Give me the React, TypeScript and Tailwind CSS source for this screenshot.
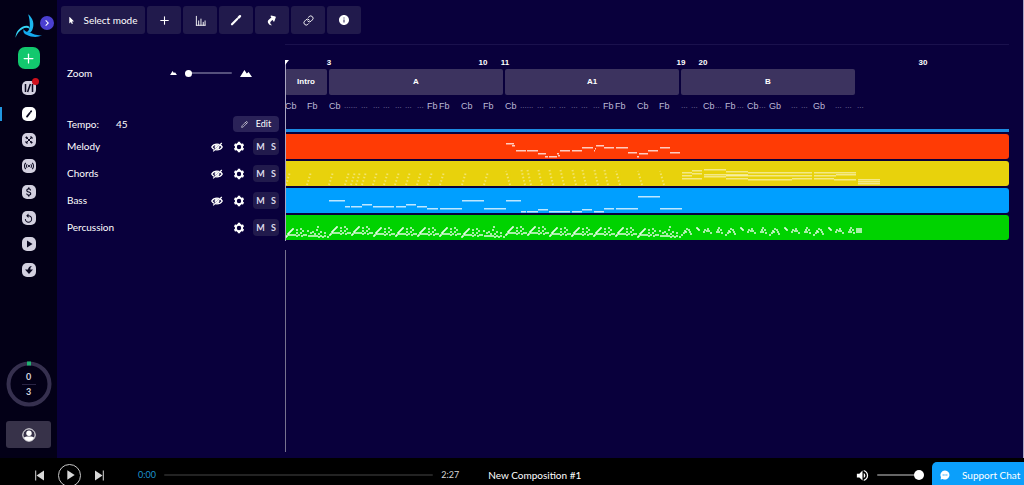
import { useState, type ReactNode } from "react";
import { Link, Plus, Pencil } from "lucide-react";
import { FaMousePointer, FaShare } from "react-icons/fa";
import {
  MdAttachMoney,
  MdChevronRight,
  MdInfo,
  MdPlayArrow,
  MdReplay,
  MdSensors,
  MdVolumeUp,
} from "react-icons/md";

const BAR = 22;

type Note = [x: number, y: number, width: number];

const sections = [
  { name: "Intro", bars: 2 },
  { name: "A", bars: 8 },
  { name: "A1", bars: 8 },
  { name: "B", bars: 8 },
];

const rulerMarks = [3, 10, 11, 19, 20, 30];

// label and distance to the next label
const phrase: [string, number][] = [
  ["Cb", 15],
  ["......", 17],
  ["...", 12],
  ["...", 10],
  ["...", 12],
  ["...", 10],
  ["...", 12],
  ["...", 10],
  ["Fb", 12],
  ["Fb", 22],
  ["Cb", 22],
  ["Fb", 22],
];

const chords: [string, number][] = [
  ["Cb", 22],
  ["Fb", 22],
  ...phrase,
  ...phrase,
  ["...", 10],
  ["...", 12],
  ["Cb", 12],
  ["...", 10],
  ["Fb", 12],
  ["...", 10],
  ["Cb", 12],
  ["...", 10],
  ["Gb", 22],
  ["...", 10],
  ["...", 12],
  ["Gb", 22],
  ["...", 10],
  ["...", 12],
  ["...", 12],
];

const melodyNotes: Note[] = [
  [221, 9, 8], [227, 11, 3], [231, 16, 10], [242, 16, 11], [253, 19, 8], [260, 22, 3],
  [264, 22, 8], [272, 19, 2], [273, 21, 2], [275, 16, 10], [287, 16, 10], [297, 13, 11],
  [309, 16, 1], [310, 14, 1], [311, 11, 8], [319, 13, 10], [331, 13, 12], [343, 18, 9],
  [352, 22, 2], [354, 19, 9], [363, 16, 10], [375, 13, 10], [385, 18, 10],
];

const bassNotes: Note[] = [
  [44, 12, 16], [60, 18, 5], [66, 18, 11], [77, 16, 10], [88, 18, 21], [111, 18, 10],
  [121, 16, 10], [132, 18, 10], [142, 20, 11], [155, 20, 22], [177, 12, 22], [199, 20, 22],
  [221, 12, 15], [236, 23, 5], [242, 23, 11], [253, 21, 10], [264, 23, 21], [287, 23, 10],
  [297, 21, 10], [309, 23, 10], [319, 20, 10], [331, 20, 22], [353, 8, 22], [375, 20, 22],
];

const sustained: Note[] = [
  [397, 11, 10], [397, 14, 10], [397, 17, 20],
  [407, 9, 10], [407, 12, 10],
  [419, 8, 22], [419, 13, 44], [419, 15, 22],
  [441, 10, 22], [441, 14, 44], [441, 17, 22],
  [463, 11, 22], [463, 18, 44], [485, 11, 22], [485, 14, 22],
  [507, 11, 20], [507, 14, 20], [507, 17, 20],
  [529, 11, 42], [529, 14, 22], [529, 17, 20], [551, 13, 20], [549, 18, 22],
  [573, 18, 22], [573, 20, 22], [573, 22, 22],
];

// strummed chords: the first half leans right, the second half leans left
const strumsUp = [1, 22, 44, 60, 66, 71, 77, 88, 99, 110, 121, 132, 143, 155, 177, 199];
const strumsDown = [221, 236, 242, 253, 264, 275, 287, 297, 309, 319, 331, 353, 375];

const beat: [number, number][] = [
  [0, 8], [1, 7], [2, 5], [3, 4], [4, 3], [5, 2], [6, 1], [7, 0],
  [3, 6], [5, 6], [7, 6], [9, 6], [11, 4], [11, 1], [11, 7], [13, 6], [15, 4],
  [15, 0], [17, 2], [16, 7], [18, 6], [20, 6],
];
const fill: [number, number][] = [
  [0, 2], [1, 7], [3, 4], [3, 7], [5, 3], [5, 7], [7, 7], [7, 5], [9, 1], [9, 7],
  [11, 5], [11, 8], [13, 3], [13, 7], [15, 8], [17, 4], [17, 7], [20, 8], [10, -2],
];
const arch: [number, number][] = [
  [0, 7], [2, 5], [3, 3], [4, 4], [5, 1], [7, 2], [8, 4], [9, 6], [15, 0], [16, 1], [17, 2],
];
const archDouble: [number, number][] = [
  [0, 4], [1, 2], [3, 3], [4, 1], [5, 3], [7, 5], [13, 4], [14, 2], [15, 0], [15, 4], [17, 2], [18, 5],
];

function percussionBar(bar: number) {
  if (bar >= 19) {
    return bar % 2 ? arch : archDouble;
  }
  return bar === 2 || bar === 10 || bar === 18 ? fill : beat;
}

function percussionTop(bar: number) {
  if ([3, 4, 11, 12].includes(bar)) return 11;
  if ([1, 2, 9, 10, 17, 18].includes(bar)) return 13;
  return 12;
}

function Notes({ notes }: { notes: Note[] }) {
  return (
    <>
      {notes.map(([x, y, width], i) => (
        <rect key={i} x={x} y={y} width={width} height={1.5} />
      ))}
    </>
  );
}

function Strum({ x, lean, top }: { x: number; lean: number; top: number }) {
  return (
    <line
      x1={lean > 0 ? x : x + 4}
      y1={24}
      x2={lean > 0 ? x + 4 : x}
      y2={top}
      stroke="currentColor"
      strokeWidth={2}
      strokeDasharray="1.5 2"
      opacity={0.8}
    />
  );
}

function Percussion() {
  return (
    <g>
      {Array.from({ length: 26 }, (_, i) => i + 1).map((bar) => (
        <g key={bar}>
          {percussionBar(bar).map(([x, y], i) => (
            <rect key={i} x={(bar - 1) * BAR + x} y={percussionTop(bar) + y} width={2} height={2} />
          ))}
        </g>
      ))}
      <rect x={571} y={13} width={6} height={5} />
    </g>
  );
}

const tracks: { name: string; lane: string; hideable: boolean; notes: ReactNode }[] = [
  { name: "Melody", lane: "bg-[#ff3b05] text-white/75", hideable: true, notes: <Notes notes={melodyNotes} /> },
  {
    name: "Chords",
    lane: "bg-[#e8d20c] text-white/50",
    hideable: true,
    notes: (
      <>
        {strumsUp.map((x) => <Strum key={x} x={x} lean={1} top={11} />)}
        {strumsDown.map((x) => <Strum key={x} x={x} lean={-1} top={x > 230 && x < 330 ? 7 : 10} />)}
        <Notes notes={sustained} />
      </>
    ),
  },
  { name: "Bass", lane: "bg-[#009fff] text-white/75", hideable: true, notes: <Notes notes={bassNotes} /> },
  { name: "Percussion", lane: "bg-[#00d300] text-white/65", hideable: false, notes: <Percussion /> },
];

function Logo() {
  return (
    <svg viewBox="46 40 80 72" className="h-6 w-[27px]" aria-hidden="true">
      <path d="M85 41c15 12 20 31 12 48-3 7-10 9-17 6 8-5 10-12 10-22 0-12-2-22-5-32z" fill="#1cb6f0" />
      <path d="M47 111c1-20 15-35 34-36 6 0 9 4 9 10-8-5-15-4-22 0-9 5-17 15-21 26z" fill="#35d6f8" />
      <path d="M71 86c-2 9 2 14 9 16 16 8 32 9 46 2-15 1-26-3-36-9-8 1-14-3-19-9z" fill="#14aaf0" />
    </svg>
  );
}

function BarsIcon() {
  return (
    <svg viewBox="0 0 12 12" className="size-[11px]" fill="none" stroke="currentColor">
      <path d="M1.500 1v10.500M4 6v5.500M6.500 4v7.500M9 7.500v4M11 6v5.500M1 11.200h10.500" />
    </svg>
  );
}

function WandIcon() {
  return (
    <svg viewBox="0 0 12 12" className="size-3" fill="none" stroke="currentColor" strokeLinecap="round">
      <path d="M2 10.300 7.200 5" strokeWidth="2.200" />
      <path d="M8.600 3.600 10 2.200" strokeWidth="2.400" />
    </svg>
  );
}

function HiddenIcon() {
  return (
    <svg viewBox="0 0 12 10" className="h-[10px] w-3" fill="none" stroke="currentColor" aria-hidden="true">
      <path d="M.8 5C3 1.200 9 1.200 11.200 5 9 8.800 3 8.800.8 5z" strokeWidth="1.400" />
      <circle cx="6" cy="5" r="2" fill="currentColor" />
      <path d="M1.800 9 10 1.600" stroke="#09003c" strokeWidth="1" />
      <path d="M2.200 9.400 10.800 1" strokeWidth="1.200" />
    </svg>
  );
}

function GearIcon() {
  return (
    <svg viewBox="0 0 12 12" className="size-3" fill="none" stroke="currentColor" aria-hidden="true">
      <circle cx="6" cy="6" r="3.200" strokeWidth="2" />
      <path d="M6 .8v1.600M6 9.600v1.600M1.500 3.400l1.400.8M9.100 7.800l1.400.8M1.500 8.600l1.400-.8M9.100 4.200l1.400-.8" strokeWidth="2.400" />
    </svg>
  );
}

function UserIcon() {
  return (
    <svg viewBox="0 0 14 14" className="size-[14px]" aria-hidden="true">
      <circle cx="7" cy="7" r="6.200" fill="none" stroke="currentColor" />
      <circle cx="7" cy="5.300" r="2.700" fill="currentColor" />
      <path d="M1.800 9.800C3.600 8.400 5 8.600 7 8.600s3.400-.2 5.200 1.200C11 12 9 13 7 13s-4-1-5.200-3.200z" fill="currentColor" />
    </svg>
  );
}

function SkipIcon({ className }: { className?: string }) {
  return (
    <svg viewBox="0 0 9 11" className={`h-[11px] w-[9px] ${className ?? ""}`} fill="currentColor" aria-hidden="true">
      <path d="M0 .5 7.500 5.500 0 10.500z" />
      <path d="M7.800.5h1v10h-1z" />
    </svg>
  );
}

function ChatIcon() {
  return (
    <svg viewBox="0 0 10 10" className="size-[10px]" aria-hidden="true">
      <path d="M5 .5a4.500 4.500 0 1 1-2.300 8.400L.6 9.400 1 7.200A4.500 4.500 0 0 1 5 .5z" fill="#fff" />
      <path d="M2.600 5h4.800" stroke="#0b9ffb" strokeWidth="1.200" strokeDasharray="1.200 .6" />
    </svg>
  );
}

function MountainIcon({ className }: { className: string }) {
  return (
    <svg viewBox="0 0 12 7" className={className} fill="currentColor" aria-hidden="true">
      <path d="M0 7 4.400 0l2.400 3.600L8.600 2 12 7z" />
    </svg>
  );
}

const tools = [
  { label: "Add", icon: <Plus size={13} /> },
  { label: "Levels", icon: <BarsIcon /> },
  { label: "Magic", icon: <WandIcon /> },
  { label: "Share", icon: <FaShare size={10} className="-rotate-30" /> },
  { label: "Link", icon: <Link size={11} /> },
  { label: "Info", icon: <MdInfo size={12} /> },
];

const navItems = [
  {
    label: "Library",
    badge: true,
    icon: (
      <svg viewBox="0 0 10 10" className="size-[10px]" stroke="currentColor" strokeWidth="1.500">
        <path d="M1.500 1v8M8.500 1v8M3.600 9 6.400 1" />
      </svg>
    ),
  },
  {
    label: "Editor",
    active: true,
    icon: (
      <svg viewBox="0 0 10 10" className="size-[10px]" stroke="currentColor" strokeLinecap="round">
        <path d="M3 7.600 5.800 4" strokeWidth="1.800" />
        <path d="M6.800 2.800 7.200 2.200" strokeWidth="1.800" />
      </svg>
    ),
  },
  {
    label: "Influences",
    icon: (
      <svg viewBox="0 0 10 10" className="size-[10px]" stroke="currentColor" fill="none">
        <path d="M2 8 8 2M2 2l6 6M6 2h2v2M2 6v2h2" />
        <path d="M1.800 1.800 3.600 3.600M6.600 6.600 8.200 8.200" strokeWidth="1.800" />
      </svg>
    ),
  },
  { label: "Radio", icon: <MdSensors size={12} /> },
  { label: "Pricing", icon: <MdAttachMoney size={12} /> },
  { label: "History", icon: <MdReplay size={11} /> },
  { label: "Tutorials", icon: <MdPlayArrow size={12} /> },
  {
    label: "Downloads",
    icon: (
      <svg viewBox="0 0 10 10" className="size-[10px]" fill="currentColor">
        <path d="M4 4.400C4.200 2.600 5.600 1.200 8 1 6.700 2 6.300 3 6.300 4.400H9L5 9 1 4.400z" />
      </svg>
    ),
  },
];

function Sidebar() {
  return (
    <aside className="flex w-[57px] shrink-0 flex-col items-center bg-[#030017]">
      <div className="relative flex h-[47px] w-full pt-[14px] pl-[15px]">
        <Logo />
        <button
          aria-label="Expand menu"
          className="absolute top-4 left-10 flex size-[14px] items-center justify-center rounded-full bg-[#4a3fd0] text-white"
        >
          <MdChevronRight size={12} />
        </button>
      </div>
      <button
        aria-label="New"
        className="flex size-[22px] items-center justify-center rounded-[7px] bg-[#12c86e] text-white"
      >
        <Plus size={15} />
      </button>
      <nav className="mt-[6px] flex w-full flex-col">
        {navItems.map((item) => (
          <a key={item.label} href="#" aria-label={item.label} className="relative flex h-[26px] items-center justify-center">
            {item.active && <span className="absolute left-0 h-[14px] w-[2px] bg-[#2196e0]" />}
            <span
              className={`relative flex size-[14px] items-center justify-center rounded-[5px] text-[#0a0820] ${
                item.active ? "bg-white" : "bg-[#d3d0e0]"
              }`}
            >
              {item.icon}
              {item.badge && <span className="absolute -top-[3px] -right-[3px] size-[7px] rounded-full bg-[#d0101c]" />}
            </span>
          </a>
        ))}
      </nav>
      <div className="mt-auto mb-[14px] flex size-[46px] items-center justify-center">
        <svg viewBox="0 0 46 46" className="absolute size-[46px]" fill="none" aria-hidden="true">
          <circle cx="23" cy="23" r="20.500" stroke="#36304f" strokeWidth="4" />
          <path d="M21 2.500h4" stroke="#1fb370" strokeWidth="4" />
        </svg>
        <div className="flex w-[14px] flex-col items-center text-[9px] leading-[14px] font-bold text-[#d5d3de]">
          <span className="w-full border-b border-[#2a2445] text-center">0</span>
          <span>3</span>
        </div>
      </div>
      <button
        aria-label="Account"
        className="mb-[10px] flex h-[27px] w-[45px] items-center justify-center rounded-[3px] bg-[#373249] text-white"
      >
        <UserIcon />
      </button>
    </aside>
  );
}

function TrackRow({ name, hideable }: { name: string; hideable: boolean }) {
  return (
    <div className="flex h-[25px] items-center text-white">
      <span className="flex-1 text-[10px]">{name}</span>
      {hideable && (
        <button aria-label={`Hide ${name}`} className="mr-[10px]">
          <HiddenIcon />
        </button>
      )}
      <button aria-label={`${name} settings`}>
        <GearIcon />
      </button>
      <div className="ml-2 flex h-[17px] w-[26px] items-center justify-around rounded-[4px] bg-[#211a4c] text-[9px] font-bold text-[#dcd9ea]">
        <button aria-label={`Mute ${name}`}>M</button>
        <button aria-label={`Solo ${name}`}>S</button>
      </div>
    </div>
  );
}

function TrackPanel() {
  const [zoom, setZoom] = useState(0);

  return (
    <div className="flex w-[228px] shrink-0 flex-col pt-[22px] pr-[6px] pl-[10px] text-white">
      <div className="flex h-[14px] items-center">
        <label htmlFor="zoom" className="flex-1 text-[10px]">
          Zoom
        </label>
        <MountainIcon className="h-1 w-[7px]" />
        <input
          id="zoom"
          type="range"
          value={zoom}
          onChange={(e) => setZoom(Number(e.target.value))}
          className="mx-2 h-[2px] w-[47px] appearance-none rounded bg-[#55507c] [&::-webkit-slider-thumb]:size-[7px] [&::-webkit-slider-thumb]:appearance-none [&::-webkit-slider-thumb]:rounded-full [&::-webkit-slider-thumb]:bg-white"
        />
        <MountainIcon className="mr-[27px] h-[7px] w-3" />
      </div>
      <div className="mt-9 flex h-4 items-center">
        <span className="w-[49px] text-[10px]">Tempo:</span>
        <span className="flex-1 text-[10px]">45</span>
        <button className="flex h-4 w-[46px] items-center justify-center gap-2 rounded-[4px] bg-[#2a2258] text-[9px]">
          <Pencil size={7} />
          Edit
        </button>
      </div>
      <div className="mt-[2px] flex flex-col gap-[2px]">
        {tracks.map((track) => (
          <TrackRow key={track.name} name={track.name} hideable={track.hideable} />
        ))}
      </div>
    </div>
  );
}

function Timeline() {
  return (
    <div className="relative mr-[14px] min-w-0 flex-1 border-t border-[#1a114d] pt-[12px] font-['Liberation_Sans',Arial,sans-serif]">
      <div className="-ml-[11px] grid h-3 grid-cols-[repeat(33,22px)] text-center text-[8px] leading-3 font-bold text-white">
        {rulerMarks.map((bar) => (
          <span key={bar} style={{ gridColumn: bar }}>
            {bar}
          </span>
        ))}
      </div>
      <div className="flex h-[26px]">
        {sections.map((section) => (
          <div key={section.name} className="pr-[2px]" style={{ width: section.bars * BAR }}>
            <div className="flex h-full items-center justify-center rounded-[2px] bg-[#3c335f] text-[8px] font-bold text-white">
              {section.name}
            </div>
          </div>
        ))}
      </div>
      <div className="mt-[3px] flex h-4 overflow-hidden text-[9px] leading-4 text-[#bdb8d6]">
        {chords.map(([label, width], i) => (
          <span key={i} className={label.startsWith(".") ? "shrink-0 text-[8px] text-[#807aa5]" : "shrink-0"} style={{ width }}>
            {label}
          </span>
        ))}
      </div>
      <div className="mt-[15px] h-[3px] bg-[#1c8ae0]" />
      <div className="mt-[2px] flex flex-col gap-[2px]">
        {tracks.map((track) => (
          <div key={track.name} className={`h-[25px] overflow-hidden rounded-r-[3px] ${track.lane}`}>
            <svg width="600" height="25" fill="currentColor" aria-hidden="true">
              {track.notes}
            </svg>
          </div>
        ))}
      </div>
      {/* Playhead */}
      <div className="absolute top-[15px] bottom-[6px] left-0 flex w-1 flex-col gap-[9px]">
        <span className="h-[181px] w-px bg-[#aaa6c0]" />
        <span className="w-px flex-1 bg-[#77728f]" />
        <svg viewBox="0 0 4 5" className="absolute top-0 left-0 h-[5px] w-1" fill="#fff">
          <path d="M0 0h4L0 5z" />
        </svg>
      </div>
    </div>
  );
}

function Player() {
  const [volume, setVolume] = useState(100);

  return (
    <footer className="h-[27px] shrink-0 overflow-hidden bg-black">
      <div className="flex h-[34px] items-center text-[#d8d8d8]">
        <button aria-label="Previous" className="ml-[35px]">
          <SkipIcon className="rotate-180" />
        </button>
        <button
          aria-label="Play"
          className="mx-[14px] flex size-[23px] items-center justify-center rounded-full border border-[#c8c8c8]"
        >
          <MdPlayArrow size={16} />
        </button>
        <button aria-label="Next">
          <SkipIcon />
        </button>
        <span className="ml-[34px] w-[26px] text-[9px] text-[#1c93cf]">0:00</span>
        <div className="h-[2px] w-[26.3%] rounded bg-[#232323]" />
        <span className="ml-2 w-[47px] text-[9px]">2:27</span>
        <span className="flex-1 text-[10px] text-white">New Composition #1</span>
        <MdVolumeUp size={15} className="text-white" />
        <input
          type="range"
          aria-label="Volume"
          value={volume}
          onChange={(e) => setVolume(Number(e.target.value))}
          className="mr-2 ml-[7px] h-[2px] w-[47px] appearance-none rounded bg-[#666] [&::-webkit-slider-thumb]:size-[10px] [&::-webkit-slider-thumb]:appearance-none [&::-webkit-slider-thumb]:rounded-full [&::-webkit-slider-thumb]:bg-white"
        />
        <button className="flex h-[26px] w-[92px] shrink-0 items-center gap-3 rounded-tl-[5px] bg-[#0b9ffb] pl-2 text-[10px] whitespace-nowrap text-white">
          <ChatIcon />
          Support Chat
        </button>
      </div>
    </footer>
  );
}

export default function App() {
  return (
    <div className="flex h-screen flex-col overflow-hidden bg-[#09003c] font-[Lato,sans-serif]">
      <div className="flex min-h-0 flex-1">
        <Sidebar />
        <main className="flex min-w-0 flex-1 flex-col border-r border-[#a9a5c4]">
          <div className="flex gap-[2px] pt-[6px] pl-1 text-white">
            <button className="flex h-7 w-[84px] items-center justify-center gap-2 rounded-[3px] bg-[#211a4c] text-[10px]">
              <FaMousePointer size={7} />
              Select mode
            </button>
            {tools.map((tool) => (
              <button
                key={tool.label}
                aria-label={tool.label}
                className="flex h-7 w-[34px] items-center justify-center rounded-[3px] bg-[#211a4c]"
              >
                {tool.icon}
              </button>
            ))}
          </div>
          <div className="mt-[10px] flex flex-1">
            <TrackPanel />
            <Timeline />
          </div>
        </main>
      </div>
      <Player />
    </div>
  );
}
